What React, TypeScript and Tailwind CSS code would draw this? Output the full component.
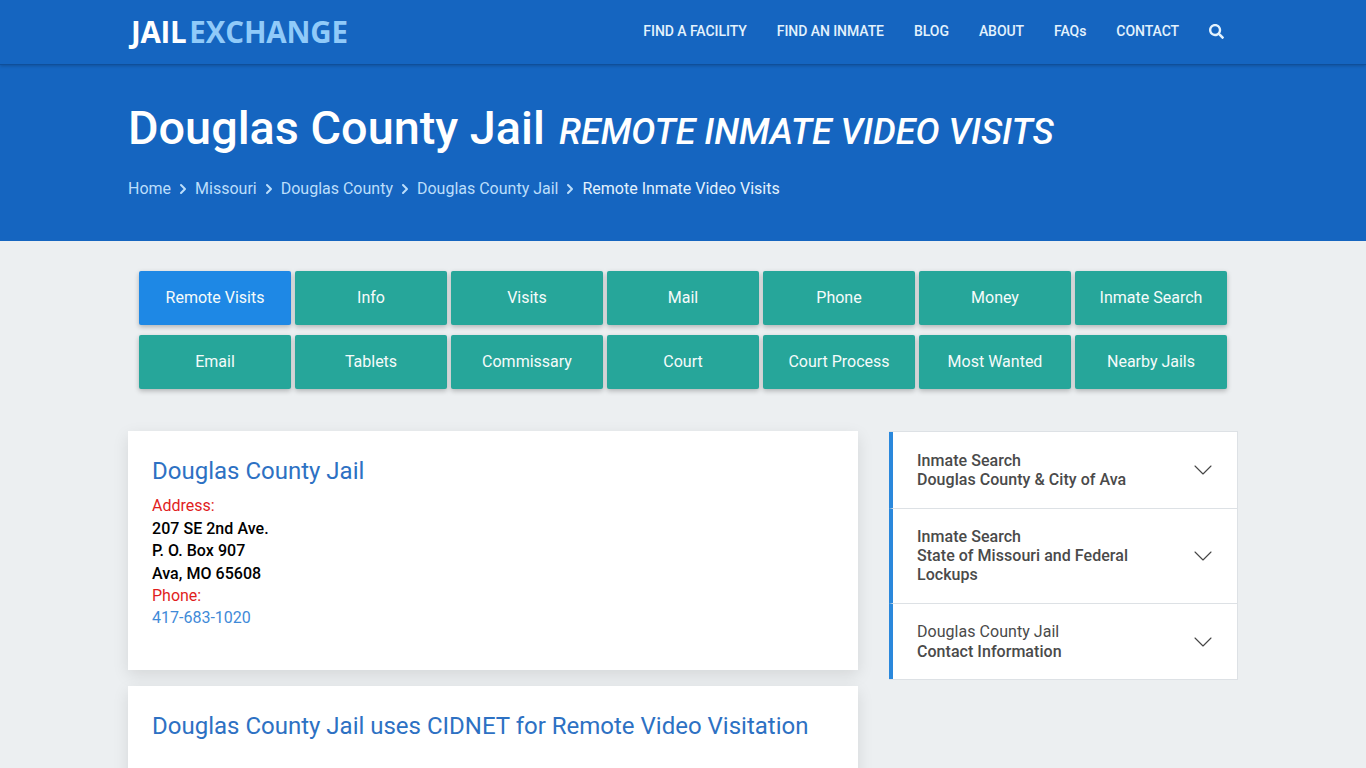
import type { ReactNode } from "react";
import { ChevronDown, ChevronRight } from "lucide-react";
import { FaSearch } from "react-icons/fa";

const navLinks = ["FIND A FACILITY", "FIND AN INMATE", "BLOG", "ABOUT", "FAQs", "CONTACT"];
const crumbs = ["Home", "Missouri", "Douglas County", "Douglas County Jail"];
const tabs = [
  ["Remote Visits", "Info", "Visits", "Mail", "Phone", "Money", "Inmate Search"],
  ["Email", "Tablets", "Commissary", "Court", "Court Process", "Most Wanted", "Nearby Jails"],
];

function SideItem({ lines, className }: { lines: ReactNode; className: string }) {
  return (
    <div className={`flex items-center justify-between border-l-4 border-l-[#2a88dc] pl-[24px] pr-[18px] ${className}`}>
      <div className="w-[240px] text-[16px] leading-[19px] tracking-[0.04px] text-[#4a4a4a]">{lines}</div>
      <ChevronDown size={32} strokeWidth={0.8} className="text-[#444]" />
    </div>
  );
}

export default function App() {
  return (
    <div className="h-screen overflow-hidden bg-[#eceff1] font-['Roboto',sans-serif]">
      <header className="bg-[#1565c0]">
        <div className="h-[65px] border-b border-[#0f4f9a] shadow-[0_1px_3px_rgba(0,0,0,0.2)]">
          <div className="mx-auto flex h-[64px] w-[1110px] items-center justify-between">
            <div className="ml-[3px] mt-[1px] font-['Open_Sans',sans-serif] text-[29.5px] font-bold text-[#90caf9]">
              <span className="tracking-[-0.3px] text-white">JAIL</span>
              <span className="ml-[3px] tracking-[-0.15px]">EXCHANGE</span>
            </div>
            <nav className="mb-[2px] mr-[14px] flex items-center gap-[30px] text-[14px] font-medium tracking-[-0.06px] text-[#e3f2fd]">
              {navLinks.map((l) => (
                <span key={l}>{l}</span>
              ))}
              <FaSearch size={15} className="text-[#e3f2fd]" />
            </nav>
          </div>
        </div>
        <div className="mx-auto h-[176px] w-[1110px] pt-[33px]">
          <h1 className="flex items-baseline gap-[14px] text-[46.8px] leading-[60px] font-medium text-white">
            Douglas County Jail
            <small className="text-[36px] font-medium italic uppercase">Remote Inmate Video Visits</small>
          </h1>
          <div className="mt-[15px] flex items-center text-[16px] leading-[24px] text-[#bbdefb]">
            {crumbs.map((c) => (
              <span key={c} className="flex items-center">
                {c}
                <ChevronRight size={16} strokeWidth={3} className="mx-[4px]" />
              </span>
            ))}
            <span className="text-[#e3f2fd]">Remote Inmate Video Visits</span>
          </div>
        </div>
      </header>

      <div className="mx-auto flex w-[1088px] flex-col gap-[10px] pt-[30px]">
        {tabs.map((row, i) => (
          <div key={i} className="flex gap-[4px]">
            {row.map((t) => (
              <div
                key={t}
                className={`flex h-[54px] w-[152px] items-center justify-center rounded-[2px] text-[16px] text-[#f5fbfa] shadow-[0_2px_5px_rgba(0,0,0,0.25)] ${t === "Remote Visits" ? "bg-[#1e88e5]" : "bg-[#26a69a]"}`}
              >
                {t}
              </div>
            ))}
          </div>
        ))}
      </div>

      <div className="mx-auto mt-[42px] flex w-[1110px] items-start justify-between">
        <div className="flex w-[730px] flex-col gap-[16px]">
          <div className="h-[239px] bg-white px-[24px] pt-[24px] shadow-[0_5px_15px_rgba(0,0,0,0.1)]">
            <h2 className="text-[24px] leading-[32px] text-[#2d71c3]">Douglas County Jail</h2>
            <div className="mt-[8.4px] text-[16px] leading-[22.4px]">
              <div className="text-[#e11d1d]">Address:</div>
              <div className="font-medium tracking-[0.04px] text-black">207 SE 2nd Ave.</div>
              <div className="font-medium tracking-[0.04px] text-black">P. O. Box 907</div>
              <div className="font-medium tracking-[0.04px] text-black">Ava, MO 65608</div>
              <div className="text-[#e11d1d]">Phone:</div>
              <div className="text-[#3f8ad8]">417-683-1020</div>
            </div>
          </div>
          <div className="h-[200px] bg-white px-[24px] pt-[24px] shadow-[0_5px_15px_rgba(0,0,0,0.1)]">
            <h2 className="text-[24px] leading-[32px] text-[#2d71c3]">Douglas County Jail uses CIDNET for Remote Video Visitation</h2>
          </div>
        </div>
        <aside className="w-[349px] divide-y divide-[#dde1e5] border border-l-0 border-[#dde1e5] bg-white">
          <SideItem
            className="py-[19px]"
            lines={
              <div className="font-medium">
                Inmate Search
                <br />
                Douglas County &amp; City of Ava
              </div>
            }
          />
          <SideItem
            className="pb-[19px] pt-[18px]"
            lines={
              <div className="font-medium">
                Inmate Search
                <br />
                State of Missouri and Federal Lockups
              </div>
            }
          />
          <SideItem
            className="py-[18px]"
            lines={
              <div>
                Douglas County Jail
                <div className="mt-px font-medium">Contact Information</div>
              </div>
            }
          />
        </aside>
      </div>
    </div>
  );
}
